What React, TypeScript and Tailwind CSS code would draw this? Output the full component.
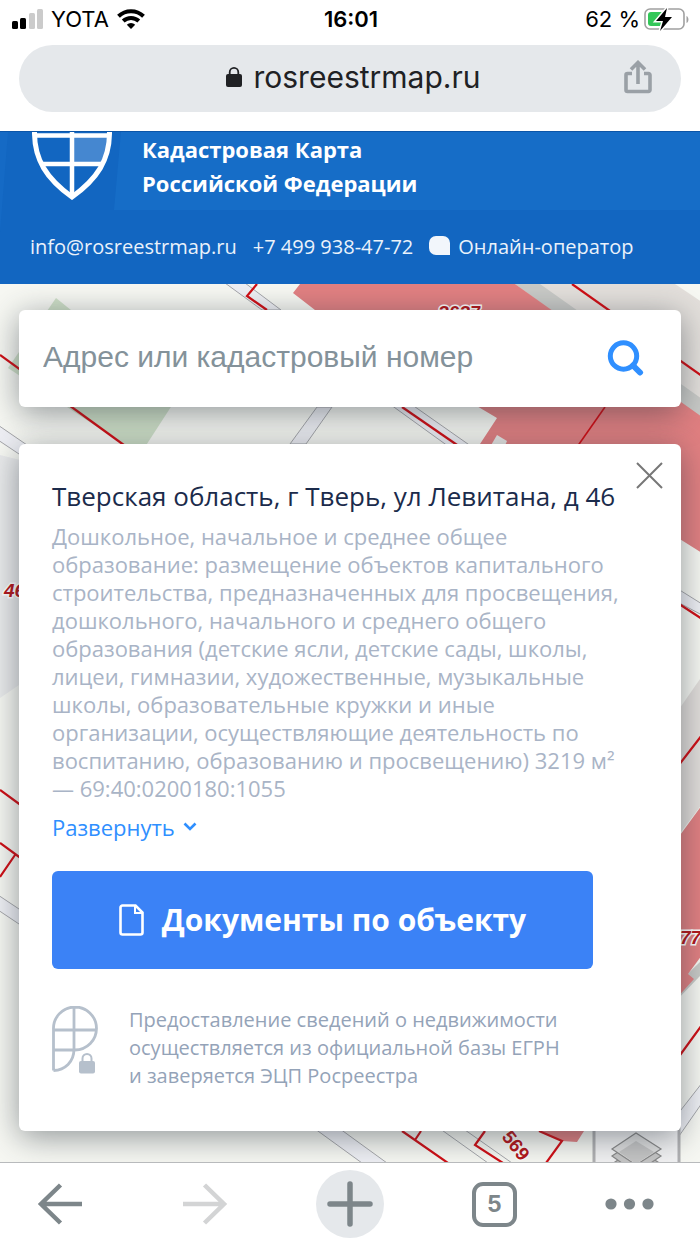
const StatusBar = () => {
  return (
    <div className="grid grid-cols-3 items-center h-[38px] pl-3 pr-[10px] font-['Inter',sans-serif] text-[22px] leading-6 text-black">
      <div className="flex items-center gap-2">
        <svg width="31" height="20" viewBox="0 0 31 20" aria-hidden="true">
          <rect x="0" y="12" width="6" height="8" rx="1.5" fill="#000" />
          <rect x="8" y="9" width="6" height="11" rx="1.5" fill="#000" />
          <rect x="17" y="4" width="6" height="16" rx="1.5" fill="#cbcbcb" />
          <rect x="25" y="0" width="6" height="20" rx="1.5" fill="#cbcbcb" />
        </svg>
        <span>YOTA</span>
        <svg width="28" height="20" viewBox="0 0 28 20" fill="none" stroke="#000" strokeWidth="4" aria-hidden="true">
          <path d="M1.500 7.200a18 18 0 0 1 25 0" />
          <path d="M6.200 12a11.500 11.500 0 0 1 15.600 0" />
          <path d="M14 20l-4.200-4.300a6 6 0 0 1 8.400 0z" fill="#000" stroke="none" />
        </svg>
      </div>
      <span className="text-center font-semibold">16:01</span>
      <div className="flex items-center justify-end gap-1">
        <span>62 %</span>
        <svg width="46" height="24" viewBox="0 0 46 24" aria-hidden="true">
          <rect x="1" y="2" width="39" height="20" rx="5" fill="#fff" stroke="#a0a0a0" strokeWidth="1.6" />
          <rect x="4" y="5" width="17" height="14" rx="3" fill="#34c759" />
          <path d="M42.500 9v7c2.600-1 2.600-6 0-7z" fill="#a0a0a0" />
          <path d="M23 1L12 14h7l-3 10L28 10h-7z" fill="#000" stroke="#fff" strokeWidth="3" paintOrder="stroke" />
        </svg>
      </div>
    </div>
  );
};

const AddressBar = () => {
  return (
    <div className="px-[19px] pt-[7px] pb-[19px]">
      <div className="grid grid-cols-[1fr_auto_1fr] items-center h-[67px] pl-[33px] pr-[27px] pb-1 rounded-full bg-[#e5e8eb]">
        <span></span>
        <div className="flex items-center gap-3 font-['Inter',sans-serif] text-[30px] leading-9 text-[#202124]">
          <svg width="16" height="20" viewBox="0 0 16 20" aria-hidden="true">
            <rect x="0" y="7" width="16" height="13" rx="2" fill="#202124" />
            <path d="M3.700 8V5.200a4.300 4.300 0 0 1 8.600 0V8" fill="none" stroke="#202124" strokeWidth="1.800" />
          </svg>
          <span>rosreestrmap.ru</span>
        </div>
        <button type="button" aria-label="Поделиться" className="justify-self-end">
          <svg width="32" height="34" viewBox="0 0 32 34" fill="none" stroke="#9aa0a6" strokeWidth="3.600">
            <path d="M10 13.500H5.500a1.500 1.500 0 0 0-1.500 1.500v15a1.500 1.500 0 0 0 1.500 1.500h21a1.500 1.500 0 0 0 1.500-1.500V15a1.500 1.500 0 0 0-1.500-1.500H22" />
            <path d="M16 24V3M9 9.500l7-7 7 7" />
          </svg>
        </button>
      </div>
    </div>
  );
};

const SiteHeader = () => {
  return (
    <header className="relative h-[153px] border-t border-[#0b55a8] bg-[#1266c1] text-white font-['Open_Sans',sans-serif]">
      <svg className="absolute inset-0 w-full h-full" viewBox="0 0 700 152" preserveAspectRatio="none" aria-hidden="true">
        <path d="M0 0H8L0 100z" fill="#156ac5" />
        <path d="M121 0H700V78H114z" fill="#166dc7" />
      </svg>
      <div className="relative flex gap-[30px] pl-8">
        <svg width="80" height="68" viewBox="0 1 80 68" fill="none" stroke="#fff" aria-hidden="true">
          <path d="M42 6h34q-1 14-7 25H42z" fill="#4587d0" stroke="none" />
          <path d="M2.500 0C2 29 15 48 40 66 65 48 78 29 77.500 0" strokeWidth="5" />
          <path d="M40 0v64M3 4.500h74M11 33h58" strokeWidth="4.500" />
        </svg>
        <p className="text-[22px] leading-[34px] font-bold">
          Кадастровая Карта
          <br />
          Российской Федерации
        </p>
      </div>
      <nav className="relative flex items-center pt-[33px] pl-[30px] gap-4 text-[20px] leading-7 text-[#eaf2fb] whitespace-nowrap">
        <a href="mailto:info@rosreestrmap.ru">info@rosreestrmap.ru</a>
        <a href="tel:+74999384772">+7 499 938-47-72</a>
        <a href="#operator" className="flex items-center gap-2">
          <span className="w-[21px] h-[19px] -mt-1 rounded-[7px] rounded-br-none bg-[#f2f6fb]"></span>
          Онлайн-оператор
        </a>
      </nav>
    </header>
  );
};

const CadastralMap = () => {
  return (
    <svg
      className="absolute inset-0 w-full h-full"
      viewBox="0 284 700 878"
      preserveAspectRatio="xMidYMin slice"
      fill="none"
      aria-hidden="true"
    >
      <rect x="0" y="284" width="700" height="878" fill="#f7f8f3" />
      <path d="M0 455L60 470V650L19 685 0 698z" fill="#eaebec" />

      {/* roads */}
      <g fill="#eff0f5" stroke="#a5a6aa">
        <path d="M-5 423L27 445 60 470 19 454-5 438z" />
        <path d="M225 283l37 27 19 0-36-27z" />
        <path d="M317 407L290 444H306L332 407z" />
        <path d="M380 397L452 449 475 449 401 397z" />
        <path d="M-2 895L25 913V928L-2 910z" />
        <path d="M670 584L702 604 702 615 670 598z" />
        <path d="M300 1118L362 1163H387L325 1118z" />
        <path d="M425 1118L488 1163M448 1118L512 1163" />
        <path d="M670 1124L702 1083V1103L670 1149z" />
      </g>

      {/* green plot */}
      <path d="M56 298L178 396 143 450H132L8 368z" fill="#cfe0c8" />

      {/* buildings with their shade */}
      <path d="M515 284H675L702 302V420z" fill="#e4e0dc" />
      <path d="M515 284H540L702 399V420z" fill="#c9cac7" />
      <path d="M702 676L675 715V840L702 804z" fill="#e2dedb" />
      <path d="M702 960L675 986V1002L702 974z" fill="#c9cac7" />
      <g fill="#e28082">
        <path d="M300 284H515L702 417V553L640 514 480 444 497 418 315 310 293 293z" />
        <path d="M675 842L702 805V955L688 974 694 979 675 1000z" />
        <path d="M539 1131H584L577 1142 562 1141z" />
      </g>
      <path d="M497 435L507 441 504 448 490 447z" fill="#e9e9e7" />

      {/* plot borders */}
      <g stroke="#d00d14" strokeWidth="2.200">
        <path d="M257 284L247 296 267 310" />
        <path d="M0 355L128 448" />
        <path d="M572 284L702 376" />
        <path d="M402 407L460 447" />
        <path d="M605 407L577 447" strokeWidth="1.600" />
        <path d="M0 790L22 806M0 843L22 859M15 855L0 877" />
        <path d="M670 598L702 619M675 770L702 735M675 1062L702 1025" />
        <path d="M402 1131L448 1163M421 1131L415 1140" />
        <path d="M485 1131L475 1145 503 1163M539 1131L562 1141 546 1163" />
      </g>

      <g
        fill="#b3161b"
        stroke="#fff"
        strokeWidth="3"
        paintOrder="stroke"
        fontFamily="Liberation Sans, sans-serif"
        fontSize="19"
      >
        <text x="439" y="319" fontWeight="bold">3637</text>
        <text x="4" y="597" fontStyle="italic" fontWeight="bold">46</text>
        <text x="680" y="944" fontStyle="italic" fontWeight="bold">77</text>
        <text x="501" y="1137" transform="rotate(52 501 1137)" fontWeight="bold" strokeWidth="2">569</text>
      </g>

      {/* layers switcher */}
      <rect x="594" y="1120" width="85" height="60" fill="#f2f2f3" stroke="#b0b0b2" strokeWidth="3" />
      <g stroke="#888" strokeWidth="1.200">
        <path d="M612 1164L636 1181 661 1164 636 1148z" fill="#bdbdbd" />
        <path d="M612 1156L636 1173 661 1156 636 1140z" fill="#c6c6c6" />
        <path d="M612 1149L636 1165 661 1149 636 1133z" fill="#dedede" />
      </g>
      <path d="M619 1152L636 1141 654 1152 636 1164z" fill="#c5c5c5" />
    </svg>
  );
};

const SearchBox = () => {
  return (
    <form className="flex items-center h-[97px] pl-6 pr-[37px] pb-[3px] rounded-md bg-white shadow-[0_6px_32px_rgba(40,50,60,0.5)]">
      <input
        type="text"
        aria-label="Адрес или кадастровый номер"
        placeholder="Адрес или кадастровый номер"
        className="flex-1 min-w-0 outline-none font-['Liberation_Sans',sans-serif] text-[30px] leading-9 placeholder:text-[#84929a]"
      />
      <button type="button" aria-label="Найти">
        <svg width="38" height="38" viewBox="0 0 38 38" fill="none" stroke="#2f8fff">
          <circle cx="17.500" cy="18" r="13.200" strokeWidth="5" />
          <path d="M27 27.500l7 7" strokeWidth="6" strokeLinecap="round" />
        </svg>
      </button>
    </form>
  );
};

const ObjectCard = () => {
  return (
    <section className="relative mt-[37px] px-[33px] pt-[35px] pb-[41px] rounded-md bg-white shadow-[0_6px_32px_rgba(40,50,60,0.5)] font-['Open_Sans',sans-serif]">
      <button type="button" aria-label="Закрыть" className="absolute top-[18px] right-[18px]">
        <svg width="27" height="27" viewBox="0 0 27 27" stroke="#777" strokeWidth="2">
          <path d="M1 1l25 25M26 1L1 26" />
        </svg>
      </button>
      <h1 className="text-[26px] leading-[34px] text-[#1b2b4b]">
        Тверская область, г Тверь, ул Левитана, д 46
      </h1>
      <p className="mt-[9px] pr-2 text-[22px] leading-7 text-[#a9b4c6]">
        Дошкольное, начальное и среднее общее образование: размещение объектов
        капитального строительства, предназначенных для просвещения,
        дошкольного, начального и среднего общего образования (детские ясли,
        детские сады, школы, лицеи, гимназии, художественные, музыкальные
        школы, образовательные кружки и иные организации, осуществляющие
        деятельность по воспитанию, образованию и просвещению) 3219 м² —
        69:40:0200180:1055
      </p>
      <button type="button" className="flex items-center gap-2 mt-[11px] text-[22px] leading-7 text-[#2f8fff]">
        Развернуть
        <svg width="14" height="10" viewBox="0 0 14 10" fill="none" stroke="#2f8fff" strokeWidth="2.600">
          <path d="M1.500 1.500L7 7l5.500-5.500" />
        </svg>
      </button>
      <button
        type="button"
        className="flex items-center justify-center gap-[18px] mt-[30px] w-[541px] max-w-full h-[98px] rounded-md bg-[#3b82f6] text-white text-[30px] leading-9 font-bold"
      >
        <svg width="25" height="32" viewBox="0 0 25 32" fill="none" stroke="#fff" strokeWidth="2.600">
          <path d="M3.500 1.500H16.500L23.500 8.500V28.500a2 2 0 0 1-2 2H3.500a2 2 0 0 1-2-2V3.500a2 2 0 0 1 2-2z" />
          <path d="M16 2v7h7" strokeWidth="2" />
        </svg>
        Документы по объекту
      </button>
      <div className="flex gap-[30px] mt-[37px]">
        <svg className="shrink-0" width="47" height="70" viewBox="0 0 47 70" fill="none" stroke="#b6c0cc" strokeWidth="2.800" aria-hidden="true">
          <path d="M1.500 64.500V23.500a21.500 21.500 0 1 1 21.500 20.500H1.500M1.500 24H45M22 2V43C22 56 13 64 1.500 64.500" />
          <rect x="27" y="55" width="16" height="12.500" rx="2" fill="#b6c0cc" stroke="none" />
          <path d="M30.500 56V52.500a4.500 4.500 0 0 1 9 0V56" strokeWidth="2" />
        </svg>
        <p className="text-[20px] leading-7 text-[#94a3b8]">
          Предоставление сведений о недвижимости
          <br />
          осуществляется из официальной базы ЕГРН
          <br />
          и заверяется ЭЦП Росреестра
        </p>
      </div>
    </section>
  );
};

const BottomBar = () => {
  return (
    <nav className="flex items-center justify-between h-[83px] pl-[26px] pr-[46px] border-t border-[#b8babc] bg-white">
      <button type="button" aria-label="Назад" className="flex justify-center w-[68px]">
        <svg width="46" height="42" viewBox="0 0 46 42" fill="none" stroke="#7d868a" strokeWidth="4.500">
          <path d="M45 21H4M23.500 2L4 21l19.500 19" />
        </svg>
      </button>
      <button type="button" aria-label="Вперёд" className="flex justify-center w-[68px]">
        <svg width="46" height="42" viewBox="0 0 46 42" fill="none" stroke="#d3d4d5" strokeWidth="4.500">
          <path d="M1 21H42M22.500 2L42 21 22.500 40" />
        </svg>
      </button>
      <button type="button" aria-label="Новая вкладка" className="flex items-center justify-center w-[68px] h-[68px] rounded-full bg-[#e5e8eb]">
        <svg width="46" height="46" viewBox="0 0 46 46" stroke="#7d868a" strokeWidth="5.500" strokeLinecap="round">
          <path d="M23 3v40M3 23h40" />
        </svg>
      </button>
      <button type="button" aria-label="Вкладки: 5" className="flex justify-center w-[68px]">
        <span className="flex items-center justify-center w-[45px] h-[45px] rounded-[11px] border-4 border-[#7d868a] font-['Inter',sans-serif] text-[23px] leading-6 font-bold text-[#7d868a]">
          5
        </span>
      </button>
      <button type="button" aria-label="Меню">
        <svg width="49" height="12" viewBox="0 0 49 12" fill="#7d868a">
          <circle cx="6" cy="6" r="5.600" />
          <circle cx="24.500" cy="6" r="5.600" />
          <circle cx="43" cy="6" r="5.600" />
        </svg>
      </button>
    </nav>
  );
};

const App = () => {
  return (
    <div className="bg-white">
      <StatusBar />
      <AddressBar />
      <SiteHeader />
      <main className="relative overflow-hidden px-[19px] pt-[26px] pb-[31px]">
        <CadastralMap />
        <div className="relative">
          <SearchBox />
          <ObjectCard />
        </div>
      </main>
      <BottomBar />
    </div>
  );
};

export default App;
